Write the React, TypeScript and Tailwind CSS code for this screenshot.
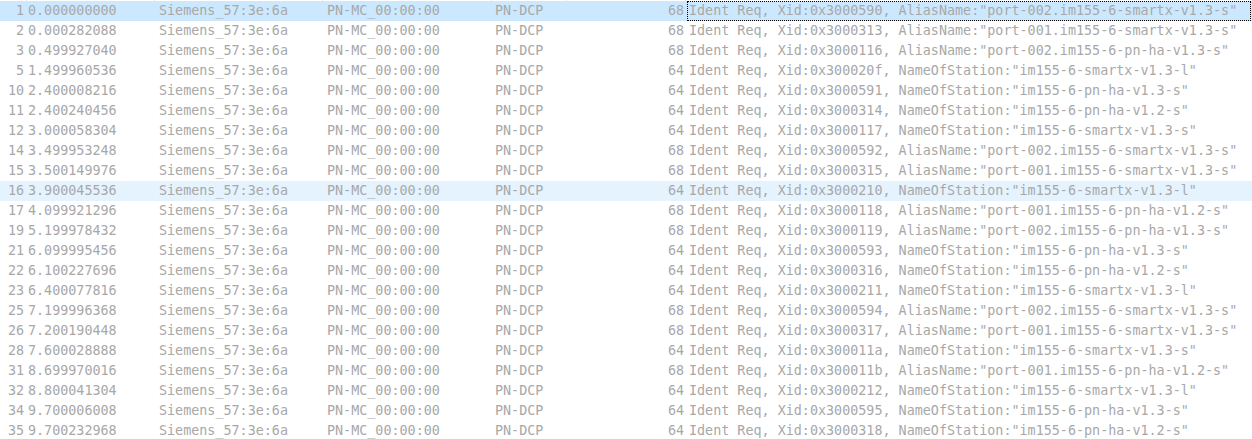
import React from "react"

type Packet = {
  no: number
  time: string
  len: number
  info: string
}

const packets: Packet[] = [
  { no: 1, time: "0.000000000", len: 68, info: 'Ident Req, Xid:0x3000590, AliasName:"port-002.im155-6-smartx-v1.3-s"' },
  { no: 2, time: "0.000282088", len: 68, info: 'Ident Req, Xid:0x3000313, AliasName:"port-001.im155-6-smartx-v1.3-s"' },
  { no: 3, time: "0.499927040", len: 68, info: 'Ident Req, Xid:0x3000116, AliasName:"port-002.im155-6-pn-ha-v1.3-s"' },
  { no: 5, time: "1.499960536", len: 64, info: 'Ident Req, Xid:0x300020f, NameOfStation:"im155-6-smartx-v1.3-l"' },
  { no: 10, time: "2.400008216", len: 64, info: 'Ident Req, Xid:0x3000591, NameOfStation:"im155-6-pn-ha-v1.3-s"' },
  { no: 11, time: "2.400240456", len: 64, info: 'Ident Req, Xid:0x3000314, NameOfStation:"im155-6-pn-ha-v1.2-s"' },
  { no: 12, time: "3.000058304", len: 64, info: 'Ident Req, Xid:0x3000117, NameOfStation:"im155-6-smartx-v1.3-s"' },
  { no: 14, time: "3.499953248", len: 68, info: 'Ident Req, Xid:0x3000592, AliasName:"port-002.im155-6-smartx-v1.3-s"' },
  { no: 15, time: "3.500149976", len: 68, info: 'Ident Req, Xid:0x3000315, AliasName:"port-001.im155-6-smartx-v1.3-s"' },
  { no: 16, time: "3.900045536", len: 64, info: 'Ident Req, Xid:0x3000210, NameOfStation:"im155-6-smartx-v1.3-l"' },
  { no: 17, time: "4.099921296", len: 68, info: 'Ident Req, Xid:0x3000118, AliasName:"port-001.im155-6-pn-ha-v1.2-s"' },
  { no: 19, time: "5.199978432", len: 68, info: 'Ident Req, Xid:0x3000119, AliasName:"port-002.im155-6-pn-ha-v1.3-s"' },
  { no: 21, time: "6.099995456", len: 64, info: 'Ident Req, Xid:0x3000593, NameOfStation:"im155-6-pn-ha-v1.3-s"' },
  { no: 22, time: "6.100227696", len: 64, info: 'Ident Req, Xid:0x3000316, NameOfStation:"im155-6-pn-ha-v1.2-s"' },
  { no: 23, time: "6.400077816", len: 64, info: 'Ident Req, Xid:0x3000211, NameOfStation:"im155-6-smartx-v1.3-l"' },
  { no: 25, time: "7.199996368", len: 68, info: 'Ident Req, Xid:0x3000594, AliasName:"port-002.im155-6-smartx-v1.3-s"' },
  { no: 26, time: "7.200190448", len: 68, info: 'Ident Req, Xid:0x3000317, AliasName:"port-001.im155-6-smartx-v1.3-s"' },
  { no: 28, time: "7.600028888", len: 64, info: 'Ident Req, Xid:0x300011a, NameOfStation:"im155-6-smartx-v1.3-s"' },
  { no: 31, time: "8.699970016", len: 68, info: 'Ident Req, Xid:0x300011b, AliasName:"port-001.im155-6-pn-ha-v1.2-s"' },
  { no: 32, time: "8.800041304", len: 64, info: 'Ident Req, Xid:0x3000212, NameOfStation:"im155-6-smartx-v1.3-l"' },
  { no: 34, time: "9.700006008", len: 64, info: 'Ident Req, Xid:0x3000595, NameOfStation:"im155-6-pn-ha-v1.3-s"' },
  { no: 35, time: "9.700232968", len: 64, info: 'Ident Req, Xid:0x3000318, NameOfStation:"im155-6-pn-ha-v1.2-s"' },
]

function PacketRow({ p }: { p: Packet }) {
  const selected = p.no === 1
  const hovered = p.no === 16
  const bg = selected ? "bg-[#cce8ff]" : hovered ? "bg-[#e5f3ff]" : "bg-white"

  return (
    <div className={`flex h-[20px] items-stretch whitespace-nowrap ${bg}`}>
      <div className="w-[24px] text-right">{p.no}</div>
      <div className="w-[131px] pl-[4px]">{p.time}</div>
      <div className="w-[168px] pl-[4px]">Siemens_57:3e:6a</div>
      <div className="w-[168px] pl-[4px]">PN-MC_00:00:00</div>
      <div className="w-[72px] pl-[4px]">PN-DCP</div>
      <div className="w-[124px] pr-[3px] text-right">{p.len}</div>
      <div
        className={`mr-[1px] flex-1 border pl-[1px] leading-[18px] ${
          selected ? "border-dotted border-black" : "border-transparent"
        }`}
      >
        {p.info}
      </div>
    </div>
  )
}

export default function App() {
  return (
    <div
      className="h-[439px] w-[1252px] overflow-hidden bg-white text-[13.4px] leading-[20px] text-[#a8a8a8]"
      style={{ fontFamily: '"DejaVu Sans Mono", "Liberation Mono", monospace' }}
    >
      {/* header remnant with column dividers */}
      <div className="flex h-[1px]">
        <div className="w-[27px] border-r border-[#e5e5e5]" />
        <div className="w-[128px] border-r border-[#e5e5e5]" />
        <div className="w-[168px] border-r border-[#e5e5e5]" />
        <div className="w-[169px] border-r border-[#e5e5e5]" />
        <div className="w-[75px] border-r border-[#e5e5e5]" />
        <div className="w-[119px] border-r border-[#e5e5e5]" />
        <div className="flex-1" />
      </div>
      {packets.map((p) => (
        <PacketRow key={p.no} p={p} />
      ))}
    </div>
  )
}
